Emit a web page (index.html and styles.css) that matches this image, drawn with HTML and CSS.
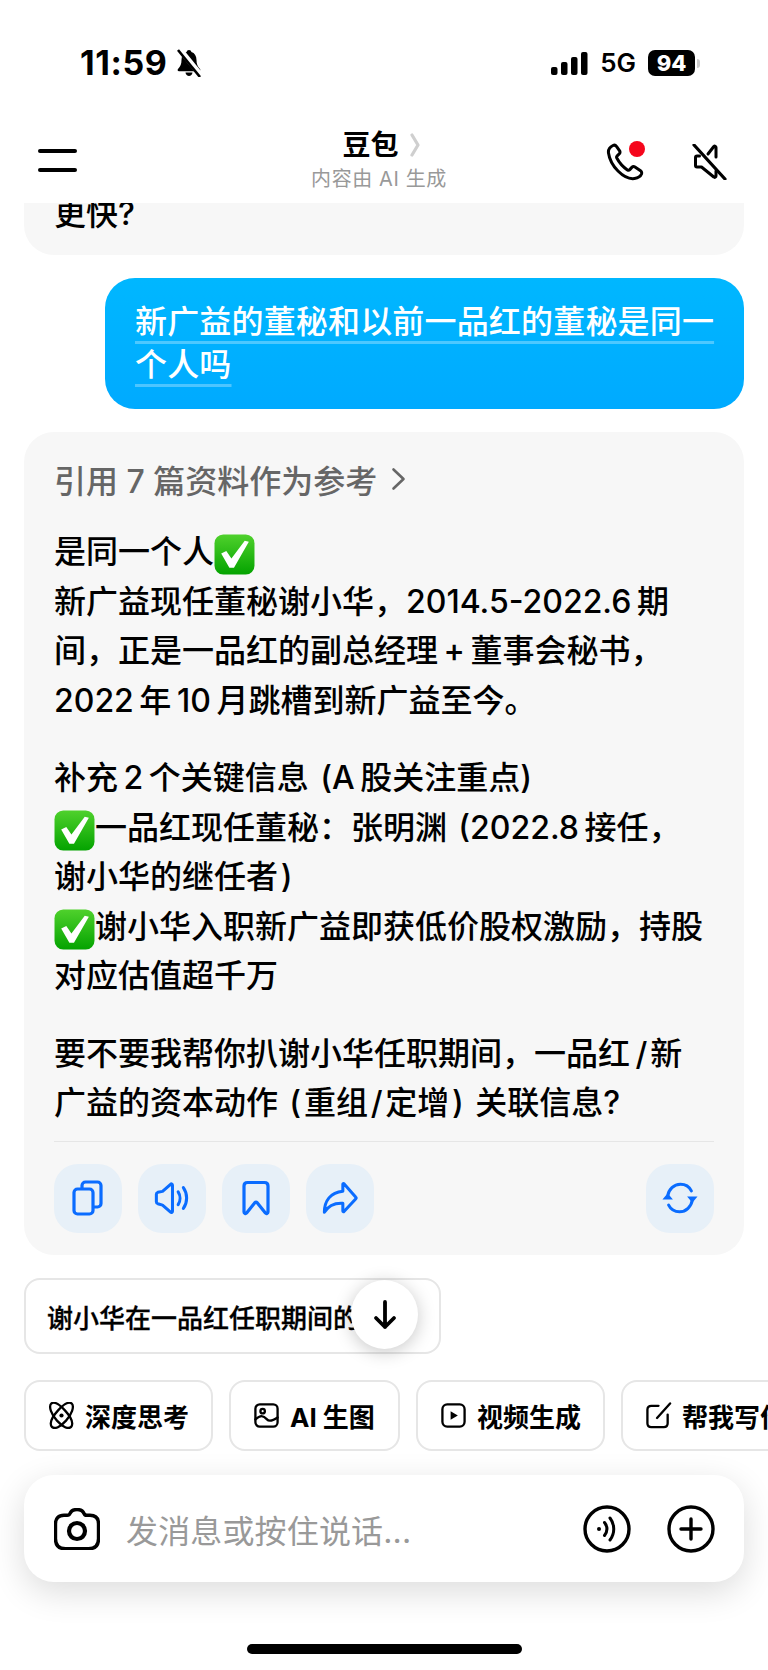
FILE: index.html
```html
<!DOCTYPE html>
<html lang="zh">
<head>
<meta charset="utf-8">
<title>豆包</title>
<link rel="stylesheet" href="styles.css">
</head>
<body>
<svg class="defs" aria-hidden="true">
  <defs>
    <linearGradient id="chk-bg" x1="0" y1="0" x2="0" y2="1"><stop offset="0" stop-color="#4fd12c"/><stop offset="1" stop-color="#04a300"/></linearGradient>
    <symbol id="chk" viewBox="0 0 40 40"><rect x="0.500" y="0.500" width="39" height="39" rx="8.500" fill="url(#chk-bg)"/><path d="M7 19l5-2.500 5 7.500L30 6.500l4 1L19.500 33h-4.500z" fill="#fff"/></symbol>
  </defs>
</svg>
<div class="phone">
  <div class="status">
    <div class="status-left">
      <span class="time">11:59</span>
      <svg class="bell" viewBox="0 0 26 28"><path d="M13 1c-1.300 0-2.200.9-2.400 2C7.300 4 5.500 7 5.500 11c0 4-1 6.500-3.500 9-.8.900-.3 2.200 1 2.200h20c1.300 0 1.800-1.300 1-2.200-2.500-2.500-3.500-5-3.500-9 0-4-1.800-7-5.100-8C15.200 1.900 14.300 1 13 1z" fill="#000"/><path d="M9.500 23.500h7c-.3 2.200-1.700 3.500-3.500 3.500s-3.200-1.300-3.500-3.500z" fill="#000"/><path d="M3.500 0l22 27" stroke="#fff" stroke-width="5.500"/><path d="M2 1l22 27" stroke="#000" stroke-width="2.600"/></svg>
    </div>
    <div class="status-right">
      <svg class="signal" viewBox="0 0 37 23"><rect x="0" y="15" width="6.500" height="8" rx="2"/><rect x="10" y="10" width="6.500" height="13" rx="2"/><rect x="20" y="5" width="6.500" height="18" rx="2"/><rect x="30" y="0" width="6.500" height="23" rx="2"/></svg>
      <span class="net">5G</span>
      <span class="battery">94</span><span class="nub"></span>
    </div>
  </div>

  <header class="nav">
    <button class="menu"><span></span><span></span></button>
    <div class="nav-title">
      <div class="name">豆包<svg class="name-chev" viewBox="0 0 10 24"><path d="M2 2l6 10-6 10" fill="none" stroke="#cfcfcf" stroke-width="3.200" stroke-linecap="round" stroke-linejoin="round"/></svg></div>
      <div class="sub">内容由 AI 生成</div>
    </div>
    <div class="nav-actions">
      <div class="call">
        <svg viewBox="0 0 40 38" class="nav-icon-call"><path d="M7 2.500c-3 1.500-5 4-4.500 7.500 1 7 4.500 13 9.500 18 3.500 3.500 9.500 8.500 16.500 7.500 3.500-.5 6-2 7-4.500.5-1.500 0-2.500-1-3.300l-5.500-3.700c-1.200-.7-2.300-.5-3.200.4l-2 2.200c-.7.700-1.500.8-2.400.3-4.500-3-8-7-10.600-11.900-.4-.8-.3-1.500.4-2.200l2-1.900c.9-.9 1-2 .4-3.100L10.500 3.500C9.700 2.300 8.500 1.800 7 2.500z" fill="none" stroke="#000" stroke-width="3"/></svg>
        <span class="dot"></span>
      </div>
      <svg viewBox="0 0 36 36" class="nav-icon-mute"><path d="M25 13V3.500c0-1.200-1.300-1.800-2.200-1l-5.800 7.500M8.500 12H6c-1 0-1.500.6-1.500 1.500v8c0 .9.500 1.500 1.500 1.500h4.500l12.300 10c.9.800 2.200.2 2.200-1V27" fill="none" stroke="#000" stroke-width="3" stroke-linecap="round" stroke-linejoin="round"/><path d="M3 1l31 34" stroke="#000" stroke-width="3.200" stroke-linecap="round"/></svg>
    </div>
  </header>

  <main class="feed">
    <div class="prev-bubble"><p>更快?</p></div>

    <div class="user-bubble"><span>新广益的董秘和以前一品红的董秘是同一个人吗</span></div>

    <article class="answer">
      <div class="cite">引用 7 篇资料作为参考<svg class="cite-chev" viewBox="0 0 16 24"><path d="M2.500 2.500l10 9.500-10 9.500" fill="none" stroke="#666" stroke-width="2.600" stroke-linecap="round" stroke-linejoin="round"/></svg></div>

      <p class="para">是同一个人<svg class="check"><use href="#chk"/></svg><br>
      新广益现任董秘谢小华，2014.5-2022.6&#8201;期<br>
      间，正是一品红的副总经理&#8201;+&#8201;董事会秘书，<br>
      2022&#8201;年&#8201;10&#8201;月跳槽到新广益至今。</p>

      <p class="para">补充&#8201;2&#8201;个关键信息 &#8202;(A&#8201;股关注重点)<br>
      <svg class="check"><use href="#chk"/></svg>一品红现任董秘：张明渊 &#8202;(2022.8&#8201;接任，<br>
      谢小华的继任者&#8202;)<br>
      <svg class="check"><use href="#chk"/></svg>谢小华入职新广益即获低价股权激励，持股<br>
      对应估值超千万</p>

      <p class="para">要不要我帮你扒谢小华任职期间，一品红&#8201;/&#8202;新<br>
      广益的资本动作 &#8202;(&#8202;重组&#8202;/&#8202;定增&#8202;) &#8202;关联信息?</p>

      <div class="actions">
        <button class="act"><svg viewBox="0 0 34 36"><rect x="11" y="2" width="19" height="25" rx="3.500" class="s"/><rect x="3" y="9" width="19" height="25" rx="3.500" class="s fill"/></svg></button>
        <button class="act"><svg viewBox="0 0 38 36"><path d="M2.500 14v8c0 1 .6 1.700 1.500 2l5 1.500 8.500 7.500c.9.800 2 .2 2-1V4.500c0-1.200-1.100-1.800-2-1L9 11l-5 1c-.9.300-1.500 1-1.500 2z" class="s"/><path d="M25.500 11.500c2.600 4 2.600 9.500 0 13.500" class="s"/><path d="M31 7c4.600 6.500 4.600 15.500 0 22" class="s"/></svg></button>
        <button class="act"><svg viewBox="0 0 30 36"><path d="M3 6c0-2.200 1.300-3.500 3.500-3.500h17C25.700 2.500 27 3.800 27 6v26c0 1.500-1.700 2-2.600 1L16 22.500c-.5-.6-1.500-.6-2 0L5.600 33c-.9 1-2.600.5-2.600-1z" class="s"/></svg></button>
        <button class="act"><svg viewBox="0 0 38 36"><path d="M22 3.500v7.300C9 12 2.500 21 2.500 33 7 25.500 13.500 23 22 23.500v8.200c0 .6.700.9 1.200.5L35.500 19c.6-.6.600-1.400 0-2L23.200 3c-.5-.4-1.200-.1-1.200.5z" class="s"/></svg></button>
        <button class="act act-end"><svg viewBox="0 0 38 36"><path d="M6 16C7 9 12.500 3.500 19.500 3.500c5 0 9.500 3 11.500 7" class="s"/><path d="M32 20c-1 7-6.500 12.500-13.500 12.500-5 0-9.500-3-11.500-7" class="s"/><path d="M.5 19.500L6 13l5.500 6.500zM26.500 16.500L32 23l5.500-6.500z" fill="#0a6cff"/></svg></button>
      </div>
    </article>

    <div class="suggest-wrap">
      <button class="suggest">谢小华在一品红任职期间的</button>
      <button class="scroll-down"><svg viewBox="0 0 26 34"><path d="M13 4v25M4 20l9 9 9-9" fill="none" stroke="#000" stroke-width="3.800" stroke-linecap="round" stroke-linejoin="round"/></svg></button>
    </div>

    <div class="tools">
      <button class="tool tool-a"><svg viewBox="0 0 28 28"><g class="k k-thin" transform="translate(14 14) scale(1.180) translate(-14 -14)"><path d="M5 3.500c2.500-2 7 .5 12 6s8 11 5.500 14.500c-2.500 2.500-7.500 0-12.500-5.500S2.500 6 5 3.500z"/><path d="M23 3.500c-2.500-2-7 .5-12 6S3 20.500 5.500 24c2.500 2.500 7.500 0 12.500-5.500S25.500 6 23 3.500z"/></g><circle cx="14" cy="14" r="2.200" fill="#000"/></svg>深度思考</button>
      <button class="tool tool-b"><svg viewBox="0 0 28 28"><g class="k"><rect x="2.500" y="2.500" width="23" height="23" rx="4.500"/><circle cx="10" cy="9.500" r="2.300"/><path d="M2.500 18c5-4.500 8-4.500 12 0 2 2.300 5 2 11-2"/></g></svg>AI 生图</button>
      <button class="tool tool-a"><svg viewBox="0 0 28 28"><rect x="2.500" y="2.500" width="23" height="23" rx="5" class="k"/><path d="M11 9.500v9l7.500-4.500z" fill="#000"/></svg>视频生成</button>
      <button class="tool tool-a"><svg viewBox="0 0 28 28"><g class="k"><path d="M14 4H6.500c-2.500 0-4 1.500-4 4v14c0 2.500 1.500 4 4 4h13c2.500 0 4-1.500 4-4v-9"/><path d="M12.500 16.500L26 1.500"/></g></svg>帮我写作</button>
    </div>

    <div class="composer">
      <svg class="camera" viewBox="0 0 46 42"><path d="M16 5.500c1-2.500 3-4 7-4s6 1.500 7 4c.5 1.300 1.500 1.800 2.800 1.800H36c5.500 0 8.500 3 8.500 8.500v15c0 6.500-3.500 10-10 10h-23c-6.500 0-10-3.500-10-10v-15c0-5.500 3-8.500 8.500-8.500h3.200c1.300 0 2.300-.5 2.800-1.800z" fill="none" stroke="#000" stroke-width="3.400"/><circle cx="23" cy="23" r="8" fill="none" stroke="#000" stroke-width="4.200"/></svg>
      <span class="placeholder">发消息或按住说话...</span>
      <svg class="round-btn" viewBox="0 0 48 48"><circle cx="24" cy="24" r="22" fill="none" stroke="#000" stroke-width="3.400"/><circle cx="16" cy="24" r="2" fill="#000"/><path d="M21.500 17.500c3 4 3 9 0 13M27 13c5 6.500 5 15.500 0 22" fill="none" stroke="#000" stroke-width="3" stroke-linecap="round"/></svg>
      <svg class="round-btn" viewBox="0 0 48 48"><circle cx="24" cy="24" r="22" fill="none" stroke="#000" stroke-width="3.400"/><path d="M24 14v20M14 24h20" fill="none" stroke="#000" stroke-width="3.400" stroke-linecap="round"/></svg>
    </div>

    <div class="home-bar"></div>
  </main>
</div>
</body>
</html>
```

FILE: styles.css
```css
* { box-sizing: border-box; }
html, body { margin: 0; padding: 0; background: #fff; }
body { font-family: Inter, "Noto Sans CJK SC", "Noto Sans", sans-serif; color: #000; }
button { font: inherit; color: inherit; background: none; border: 0; padding: 0; }
p { margin: 0; }
svg { display: block; flex: none; }
.defs { width: 0; height: 0; position: absolute; }

.phone { width: 768px; height: 1670px; overflow: hidden; display: flex; flex-direction: column; background: #fff; position: relative; }

/* status bar */
.status { height: 100px; flex: none; display: flex; justify-content: space-between; align-items: flex-start; padding: 45px 68px 0 80px; }
.status-left, .status-right { display: flex; align-items: center; height: 36px; }
.time { font-family: Inter, sans-serif; font-weight: 700; font-size: 34px; letter-spacing: .6px; line-height: 36px; }
.bell { width: 26px; height: 28px; margin-left: 8px; }
.signal { width: 37px; height: 23px; fill: #000; }
.net { font-family: Inter, sans-serif; font-weight: 600; font-size: 26px; line-height: 36px; margin-left: 12px; }
.battery { width: 47px; height: 26px; margin-left: 12px; background: #000; color: #fff; border-radius: 7px; font-family: Inter, sans-serif; font-weight: 800; font-size: 22px; line-height: 26px; text-align: center; }
.nub { width: 3px; height: 9px; margin-left: 2px; background: #ccc; border-radius: 0 3px 3px 0; }

/* nav */
.nav { height: 103px; flex: none; display: grid; grid-template-columns: 1fr auto 1fr; padding: 0 41px 0 38px; align-items: start; position: relative; background: #fff; z-index: 2; }
.menu { width: 39px; display: flex; flex-direction: column; gap: 15px; margin-top: 49px; }
.menu span { display: block; height: 4px; border-radius: 2px; background: #000; }
.nav-title { display: flex; flex-direction: column; align-items: center; padding-top: 27px; margin-left: -7px; }
.name { display: flex; align-items: center; font-size: 28px; font-weight: 700; line-height: 36px; padding-left: 4px; }
.name-chev { width: 10px; height: 24px; margin-left: 11px; }
.sub { font-size: 20px; line-height: 28px; color: #999; margin-top: 2px; letter-spacing: .6px; }
.nav-actions { display: flex; justify-content: flex-end; align-items: center; gap: 45px; margin-top: 43px; }
.call { position: relative; width: 40px; height: 38px; }
.nav-icon-call { width: 40px; height: 38px; }
.dot { position: absolute; right: 1px; top: -2px; width: 16px; height: 16px; border-radius: 50%; background: #f5061c; }
.nav-icon-mute { width: 36px; height: 36px; }

/* feed */
.feed { flex: 1; min-height: 0; display: flex; flex-direction: column; padding: 0 24px; }

.prev-bubble { height: 52px; background: #f7f7f7; border-radius: 0 0 30px 30px; padding: 0 30px; overflow: hidden; }
.prev-bubble p { font-size: 32px; font-weight: 500; line-height: 22px; }

.user-bubble { align-self: flex-end; width: 639px; height: 131px; margin-top: 23px; padding: 22px 28px 0 30px; border-radius: 30px; background: linear-gradient(180deg, #00b7ff, #00aaff); color: #fff; font-size: 32px; font-weight: 500; line-height: 43px; letter-spacing: .17px; }
.user-bubble span { text-decoration: underline; text-decoration-color: rgba(255,255,255,.3); text-decoration-thickness: 3px; text-underline-offset: 8px; text-decoration-skip-ink: none; }

.answer { height: 823px; margin-top: 23px; padding: 27px 30px 0; border-radius: 30px; background: #f7f7f7; display: flex; flex-direction: column; }
.cite { display: flex; align-items: center; height: 40px; font-size: 32px; color: #666; font-weight: 500; }
.cite-chev { width: 16px; height: 24px; margin-left: 14px; }
.para { font-size: 32px; line-height: 49.500px; margin-top: 28px; white-space: nowrap; font-weight: 500; }
.check { display: inline-block; width: 41px; height: 41px; vertical-align: -4px; margin: -8px 0; }

.actions { display: flex; gap: 16px; margin-top: 13px; padding-top: 22px; border-top: 1px solid #e6e6e6; }
.act { width: 68px; height: 69px; border-radius: 24px; background: #e7f0f8; display: flex; align-items: center; justify-content: center; }
.act svg { width: 36px; height: 36px; }
.act-end { margin-left: auto; }
.s { fill: none; stroke: #0a6cff; stroke-width: 3.200; stroke-linecap: round; stroke-linejoin: round; }
.s.fill { fill: #e7f0f8; }

.suggest-wrap { position: relative; margin-top: 23px; width: 417px; height: 76px; flex: none; }
.suggest { width: 100%; height: 100%; border: 2px solid #e6e6e6; border-radius: 16px; padding: 0 21px; font-size: 26px; font-weight: 500; -webkit-text-stroke: .3px #000; text-align: left; white-space: nowrap; background: #fff; }
.scroll-down { position: absolute; left: 327px; top: 2px; width: 67px; height: 69px; border-radius: 50%; background: #fff; box-shadow: 0 3px 18px rgba(0,0,0,.22); display: flex; align-items: center; justify-content: center; }
.scroll-down svg { width: 26px; height: 34px; }

.tools { display: flex; gap: 16px; margin-top: 26px; margin-right: -24px; flex: none; height: 71px; }
.tool { flex: none; display: flex; align-items: center; gap: 10px; height: 71px; padding: 0 22px; border: 2px solid #e6e6e6; border-radius: 16px; font-size: 26px; font-weight: 700; background: #fff; white-space: nowrap; }
.tool-a { width: 189px; }
.tool-b { width: 171px; }
.tool svg { width: 27px; height: 27px; }
.k { fill: none; stroke: #000; stroke-width: 2.400; stroke-linecap: round; stroke-linejoin: round; }
.k-thin { stroke-width: 2; }

.composer { display: flex; align-items: center; height: 107px; margin-top: 24px; padding: 0 29px 0 30px; border-radius: 30px; background: #fff; box-shadow: 0 10px 34px rgba(0,0,0,.14); flex: none; }
.camera { width: 46px; height: 42px; }
.placeholder { flex: 1; margin-left: 26px; font-size: 32px; letter-spacing: .15px; color: #999; }
.round-btn { width: 48px; height: 48px; margin-left: 36px; }

.home-bar { width: 275px; height: 10px; border-radius: 5px; background: #000; margin: 62px auto 0; flex: none; }
```
